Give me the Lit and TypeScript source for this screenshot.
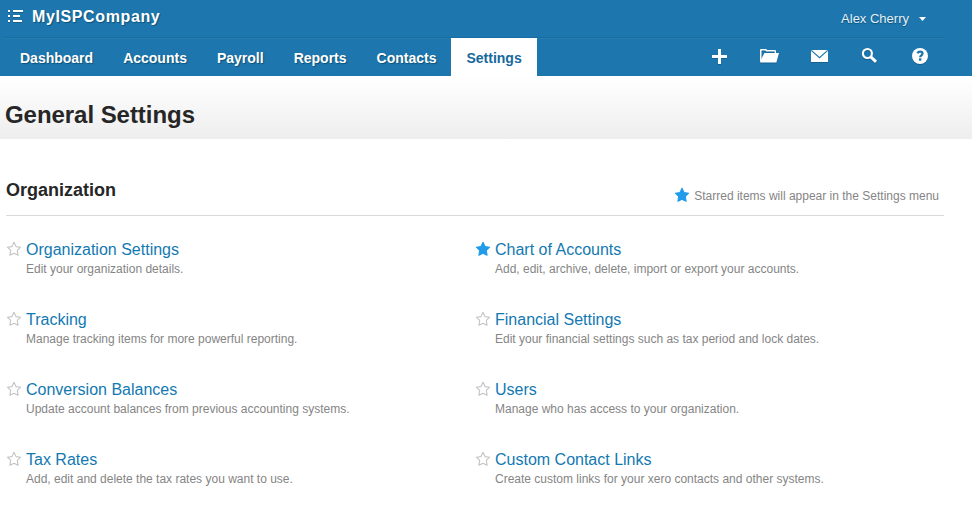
import { LitElement, html, css, svg } from "lit";
import { customElement, property } from "lit/decorators.js";
import { classMap } from "lit/directives/class-map.js";

interface SettingItem {
  title: string;
  text: string;
  starred?: boolean;
}

const TABS = ["Dashboard", "Accounts", "Payroll", "Reports", "Contacts", "Settings"];

const ITEMS: SettingItem[] = [
  { title: "Organization Settings", text: "Edit your organization details." },
  { title: "Chart of Accounts", text: "Add, edit, archive, delete, import or export your accounts.", starred: true },
  { title: "Tracking", text: "Manage tracking items for more powerful reporting." },
  { title: "Financial Settings", text: "Edit your financial settings such as tax period and lock dates." },
  { title: "Conversion Balances", text: "Update account balances from previous accounting systems." },
  { title: "Users", text: "Manage who has access to your organization." },
  { title: "Tax Rates", text: "Add, edit and delete the tax rates you want to use." },
  { title: "Custom Contact Links", text: "Create custom links for your xero contacts and other systems." },
];

const ICONS = [
  { name: "Add", art: svg`<path fill="#fff" d="M8 2h3v6h6v3h-6v6H8v-6H2V8h6z"/>` },
  {
    name: "Files",
    art: svg`<path fill="#fff" d="M0 3q0-1 1-1h4.6q.7 0 1.1.5l.5.6H15q1 0 1 1v2h-1.3V4.6H6.3L5.2 3.4H1.5V12L0 15z"/><path fill="#fff" d="M4.4 6H19l-2.6 9.6H.2V14z"/>`,
  },
  {
    name: "Messages",
    art: svg`<rect x="1" y="3" width="17" height="12" rx=".6" fill="#fff"/><path d="M1.3 3.4l8.2 7.2 8.2-7.2" fill="none" stroke="#1d76ae" stroke-width="1.2"/>`,
  },
  {
    name: "Search",
    art: svg`<circle cx="7.4" cy="6.5" r="4.5" fill="none" stroke="#fff" stroke-width="2.1"/><path d="M10.6 9.6l5.4 5.2" stroke="#fff" stroke-width="3"/>`,
  },
  {
    name: "Help",
    art: svg`<circle cx="10" cy="9" r="8" fill="#fff"/><path d="M7.4 6.2q.8-1.5 2.7-1.5 2.4 0 2.4 1.9 0 1.1-1.2 1.8-1.1.7-1.1 1.9" fill="none" stroke="#1d76ae" stroke-width="2.3"/><rect x="9" y="11.3" width="2.4" height="2.4" fill="#1d76ae"/>`,
  },
];

@customElement("star-mark")
export class StarMark extends LitElement {
  @property({ type: Boolean }) filled = false;

  static styles = css`
    :host { display: block; width: 16px; height: 16px; }
    .star { display: block; }
    .shape { fill: #fff; stroke: #c4c4c4; stroke-width: 1.1; stroke-linejoin: round; }
    .filled { fill: #219bea; stroke: #219bea; }
  `;

  render() {
    return html`<svg class="star" width="16" height="16" viewBox="0 0 16 16">
      <path class=${classMap({ shape: true, filled: this.filled })}
        d="M8 1.3l2 4.3 4.6.6-3.3 3.2.8 4.9L8 12.2l-4.1 2.1.8-4.9L1.4 6.2l4.6-.6z" />
    </svg>`;
  }
}

@customElement("app-root")
export class AppRoot extends LitElement {
  static styles = css`
    :host {
      display: block;
      height: 518px;
      overflow: hidden;
      background: #fff;
      font-family: "Liberation Sans", Arial, sans-serif;
      color: #262626;
    }
    .header { height: 76px; background: #1d76ae; color: #fff; }
    .top {
      display: flex;
      box-sizing: border-box;
      height: 38px;
      margin: 0 27px 0 5px;
      padding: 0 17px 0 3px;
      border-bottom: 1px solid #196ca1;
      box-shadow: 0 1px #257eab;
    }
    .menu { display: block; margin: 10px 9px 0 0; filter: drop-shadow(0 1px 0 #135f8d); }
    .company {
      margin-right: auto;
      padding-top: 7px;
      font-size: 16px;
      letter-spacing: 0.62px;
      line-height: 20px;
      font-weight: bold;
      text-shadow: 1px 1px 1px #0e5279;
    }
    .user {
      padding-top: 9px;
      font-size: 13px;
      line-height: 20px;
      color: #e4f1f7;
      text-shadow: 0 1px 1px #0e5279;
    }
    .caret {
      width: 7px;
      height: 4px;
      margin: 17px 2px 0 10px;
      background: #fff;
      clip-path: polygon(0 0, 100% 0, 50% 100%);
    }
    .bar { display: flex; height: 38px; padding: 0 42px 0 5px; }
    .tabs { display: flex; margin-right: auto; }
    .tab {
      padding: 0 15px;
      font-size: 14px;
      line-height: 40px;
      height: 38px;
      font-weight: bold;
      text-shadow: 1px 1px 1px #0e5279;
    }
    .current { background: #fff; color: #17699d; text-shadow: none; }
    .tools { display: flex; gap: 30px; padding-top: 9px; }
    .tool { display: block; overflow: visible; filter: drop-shadow(0 1px 0 #135f8d); }
    .banner {
      display: flex;
      align-items: center;
      box-sizing: border-box;
      height: 63px;
      padding: 14px 5px 0;
      background: linear-gradient(#fff, #eee);
    }
    .page-title { margin: 0; font-size: 24px; letter-spacing: -0.05px; line-height: 28px; font-weight: bold; }
    .section { margin: 0 28px 0 6px; }
    .section-head {
      display: flex;
      box-sizing: border-box;
      height: 77px;
      border-bottom: 1px solid #d9d9d9;
    }
    .section-title {
      margin: 0 auto 0 0;
      padding-top: 40px;
      font-size: 18px;
      line-height: 22px;
      font-weight: bold;
    }
    .hint {
      display: flex;
      gap: 4px;
      padding: 48px 5px 0 0;
      font-size: 12px;
      line-height: 18px;
      color: #858585;
    }
    .grid {
      display: grid;
      grid-template-columns: 469px 469px;
      grid-auto-rows: 70px;
      padding-top: 24px;
    }
    .item { display: flex; gap: 4px; }
    .mark { margin-top: 1px; }
    .link { font-size: 16px; line-height: 20px; color: #1379b2; }
    .text { font-size: 12px; line-height: 16px; margin-top: 1px; color: #858585; }
  `;

  render() {
    return html`
      <header class="header">
        <div class="top">
          <svg class="menu" width="15" height="12" viewBox="0 0 15 12">
            <path fill="#fff" d="M0 0h2v2H0zM0 5h2v2H0zM0 10h2v2H0zM5 0h10v2H5zM5 5h7v2H5zM5 10h9v2H5z" />
          </svg>
          <div class="company">MyISPCompany</div>
          <div class="user">Alex Cherry</div>
          <div class="caret"></div>
        </div>
        <div class="bar">
          <nav class="tabs">
            ${TABS.map((t) => html`<div class=${classMap({ tab: true, current: t === "Settings" })}>${t}</div>`)}
          </nav>
          <div class="tools">
            ${ICONS.map(
              (i) => html`<svg class="tool" width="20" height="20" viewBox="0 0 20 20" aria-label=${i.name}>${i.art}</svg>`
            )}
          </div>
        </div>
      </header>
      <div class="banner"><h1 class="page-title">General Settings</h1></div>
      <main class="section">
        <div class="section-head">
          <h2 class="section-title">Organization</h2>
          <div class="hint"><star-mark filled></star-mark><span>Starred items will appear in the Settings menu</span></div>
        </div>
        <div class="grid">
          ${ITEMS.map(
            (i) => html`<div class="item">
              <star-mark class="mark" ?filled=${!!i.starred}></star-mark>
              <div>
                <div class="link">${i.title}</div>
                <div class="text">${i.text}</div>
              </div>
            </div>`
          )}
        </div>
      </main>
    `;
  }
}
